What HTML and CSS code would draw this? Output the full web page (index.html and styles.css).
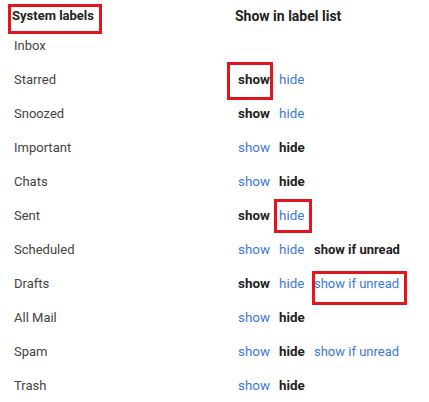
FILE: index.html
```html
<!DOCTYPE html>
<html>
<head>
<meta charset="utf-8">
<link rel="stylesheet" href="styles.css">
</head>
<body>
<div class="page">
  <div class="head">
    <div class="label-col head-label">System labels</div>
    <div class="act-col head-act">Show in label list</div>
  </div>
  <div class="row"><div class="label-col">Inbox</div><div class="act-col"></div></div>
  <div class="row"><div class="label-col">Starred</div><div class="act-col"><span class="on">show</span><span class="link">hide</span></div></div>
  <div class="row"><div class="label-col">Snoozed</div><div class="act-col"><span class="on">show</span><span class="link">hide</span></div></div>
  <div class="row"><div class="label-col">Important</div><div class="act-col"><span class="link">show</span><span class="on">hide</span></div></div>
  <div class="row"><div class="label-col">Chats</div><div class="act-col"><span class="link">show</span><span class="on">hide</span></div></div>
  <div class="row"><div class="label-col">Sent</div><div class="act-col"><span class="on">show</span><span class="link">hide</span></div></div>
  <div class="row"><div class="label-col">Scheduled</div><div class="act-col"><span class="link">show</span><span class="link">hide</span><span class="on">show if unread</span></div></div>
  <div class="row"><div class="label-col">Drafts</div><div class="act-col"><span class="on">show</span><span class="link">hide</span><span class="link">show if unread</span></div></div>
  <div class="row"><div class="label-col">All Mail</div><div class="act-col"><span class="link">show</span><span class="on">hide</span></div></div>
  <div class="row"><div class="label-col">Spam</div><div class="act-col"><span class="link">show</span><span class="on">hide</span><span class="link">show if unread</span></div></div>
  <div class="row"><div class="label-col">Trash</div><div class="act-col"><span class="link">show</span><span class="on">hide</span></div></div>

  <div class="mark mark-header"></div>
  <div class="mark mark-show"></div>
  <div class="mark mark-hide"></div>
  <div class="mark mark-unread"></div>
</div>
</body>
</html>
```
FILE: styles.css
```css
html, body {
  margin: 0;
  padding: 0;
  background: #ffffff;
}
body {
  font-family: Roboto, "Liberation Sans", Arial, sans-serif;
  font-size: 13px;
  color: #444444;
}
.page {
  position: relative;
  width: 429px;
  height: 402px;
  overflow: hidden;
}
.head {
  display: grid;
  grid-template-columns: 235px 1fr;
  height: 29px;
  padding-top: 3px;
  box-sizing: border-box;
  line-height: 26px;
  font-weight: 700;
  color: #222222;
}
.head-label {
  padding-left: 12px;
  font-size: 13px;
}
.head-act {
  font-size: 14px;
}
.row {
  display: grid;
  grid-template-columns: 238px 1fr;
  height: 34px;
  line-height: 34px;
}
.row .label-col {
  padding-left: 14px;
  color: #444444;
}
.row .act-col {
  display: grid;
  grid-template-columns: 41px 35px auto;
  justify-content: start;
  font-size: 13.4px;
}
.on {
  font-weight: 700;
  color: #222222;
}
.link {
  color: #3b78e0;
}
.act-col span:nth-child(3) {
  font-size: 13px;
}
.mark {
  position: absolute;
  border: 3px solid #e3141b;
  box-sizing: border-box;
}
.mark-header {
  left: 8px;
  top: 4px;
  width: 94px;
  height: 30px;
}
.mark-show {
  left: 227px;
  top: 62px;
  width: 46px;
  height: 38px;
}
.mark-hide {
  left: 274px;
  top: 199px;
  width: 38px;
  height: 34px;
}
.mark-unread {
  left: 312px;
  top: 271px;
  width: 95px;
  height: 34px;
}
```
